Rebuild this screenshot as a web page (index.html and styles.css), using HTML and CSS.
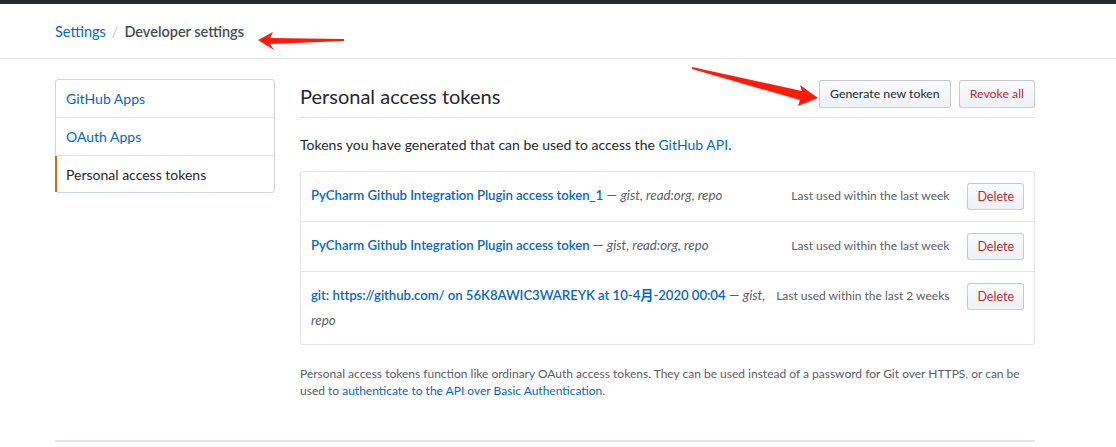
FILE: index.html
```html
<!DOCTYPE html>
<html>
<head>
<meta charset="utf-8">
<link rel="stylesheet" href="styles.css">
</head>
<body>
<div class="topbar"></div>
<div class="pagehead">
  <nav class="breadcrumb"><a href="#" class="crumb-link">Settings</a><span class="sep">/</span><strong class="crumb-current">Developer settings</strong></nav>
</div>
<div class="layout">
  <nav class="menu">
    <a href="#" class="menu-item">GitHub Apps</a>
    <a href="#" class="menu-item">OAuth Apps</a>
    <a href="#" class="menu-item selected">Personal access tokens</a>
  </nav>
  <main class="main">
    <div class="subhead">
      <h2 class="subhead-title">Personal access tokens</h2>
      <div class="subhead-actions">
        <button class="btn">Generate new token</button>
        <button class="btn btn-danger">Revoke all</button>
      </div>
    </div>
    <p class="intro">Tokens you have generated that can be used to access the <a href="#">GitHub API</a>.</p>
    <div class="list">
      <div class="row">
        <div class="desc"><a href="#" class="token-name">PyCharm Github Integration Plugin access token_1</a> — <em>gist, read:org, repo</em></div>
        <span class="last-used">Last used within the last week</span>
        <button class="btn btn-danger btn-del">Delete</button>
      </div>
      <div class="row">
        <div class="desc"><a href="#" class="token-name">PyCharm Github Integration Plugin access token</a> — <em>gist, read:org, repo</em></div>
        <span class="last-used">Last used within the last week</span>
        <button class="btn btn-danger btn-del">Delete</button>
      </div>
      <div class="row">
        <div class="desc"><a href="#" class="token-name">git: https://github.com/ on 56K8AWIC3WAREYK at 10-4月-2020 00:04</a> — <em>gist, repo</em></div>
        <span class="last-used">Last used within the last 2 weeks</span>
        <button class="btn btn-danger btn-del">Delete</button>
      </div>
    </div>
    <p class="note">Personal access tokens function like ordinary OAuth access tokens. They can be used instead of a password for Git over HTTPS, or can be used to <a href="#">authenticate to the API over Basic Authentication</a>.</p>
  </main>
</div>
<div class="footer-line"></div>

<svg class="arrow arrow-1" width="100" height="20" viewBox="0 0 100 20">
  <polygon points="2,8 17,0 14,6 88,7 88,9 14,12 18,18" fill="#ff1a0a"/>
</svg>
<svg class="arrow arrow-2" width="140" height="44" viewBox="0 0 140 44">
  <polygon points="2,1 112,25 110,19 128,32 108,40 110,34 2,3" fill="#ff1a0a"/>
</svg>
</body>
</html>
```
FILE: styles.css
```css
* { box-sizing: border-box; }
html, body { margin: 0; padding: 0; background: #fff; }
body {
  font-family: "Lato", "Noto Sans CJK SC", sans-serif;
  font-size: 14px;
  color: #24292e;
  position: relative;
  width: 1116px;
  height: 447px;
  overflow: hidden;
}
a { color: #0366d6; text-decoration: none; }

.topbar { height: 4px; background: #24292e; }
.pagehead {
  height: 55px;
  border-bottom: 1px solid #e1e4e8;
  padding: 17px 0 0 55px;
}
.breadcrumb { font-size: 14.5px; line-height: 22px; }
.sep { color: #c6cbd1; margin: 0 6px; }
.crumb-current { color: #444d56; font-weight: 600; }

.layout {
  display: flex;
  gap: 25px;
  margin: 20px 0 0 55px;
  width: 980px;
}
.menu {
  width: 220px;
  flex: none;
  align-self: flex-start;
  border: 1px solid #d1d5da;
  border-radius: 3px;
  display: flex;
  flex-direction: column;
}
.menu-item {
  display: block;
  height: 38px;
  line-height: 37px;
  padding: 0 10px;
  border-bottom: 1px solid #e1e4e8;
  font-size: 14px;
}
.menu-item:last-child { border-bottom: none; height: 36px; }
.menu-item.selected {
  color: #24292e;
  border-left: 2px solid #e36209;
  padding-left: 9px;
  margin-left: -1px;
}

.main { flex: 1; width: 735px; }
.subhead {
  display: flex;
  align-items: center;
  justify-content: space-between;
  border-bottom: 1px solid #e1e4e8;
  height: 38px;
  padding-bottom: 9px;
  margin-top: 1px;
}
.subhead-title { margin: 0; font-size: 20px; font-weight: 400; line-height: 30px; padding-top: 3px; }
.subhead-actions { display: flex; gap: 8px; }
.btn {
  font-family: inherit;
  font-size: 12.3px;
  height: 28px;
  padding: 0 10px;
  color: #24292e;
  background: linear-gradient(#fafbfc, #eff3f6 90%);
  border: 1px solid rgba(27,31,35,0.2);
  border-radius: 3px;
  line-height: 26px;
}
.btn-danger { color: #cb2431; }

.intro { margin: 16px 0 15px; font-size: 14px; line-height: 22px; }

.list {
  border: 1px solid #e1e4e8;
  border-radius: 3px;
}
.row {
  display: flex;
  align-items: flex-start;
  padding: 11px 10px 11px;
  border-bottom: 1px solid #e1e4e8;
}
.row:last-child { border-bottom: none; }
.desc { flex: 1; line-height: 25px; font-size: 13.2px; color: #586069; }
.token-name { font-weight: 600; letter-spacing: -0.05px; }
.desc em { font-size: 13.3px; color: #586069; }
.last-used {
  font-size: 12px;
  color: #586069;
  line-height: 25px;
  margin: 0 18px 0 0;
}
.btn-del { height: 27px; line-height: 25px; font-size: 12.5px; padding: 0 9px; }

.note {
  margin: 20px 0 0;
  font-size: 12px;
  line-height: 17px;
  color: #586069;
}

.footer-line {
  position: absolute;
  left: 55px;
  top: 440px;
  width: 980px;
  height: 2px;
  background: #e1e4e8;
}

.arrow { position: absolute; }
.arrow-1 { left: 256px; top: 32px; }
.arrow-2 { left: 690px; top: 66px; }
```
